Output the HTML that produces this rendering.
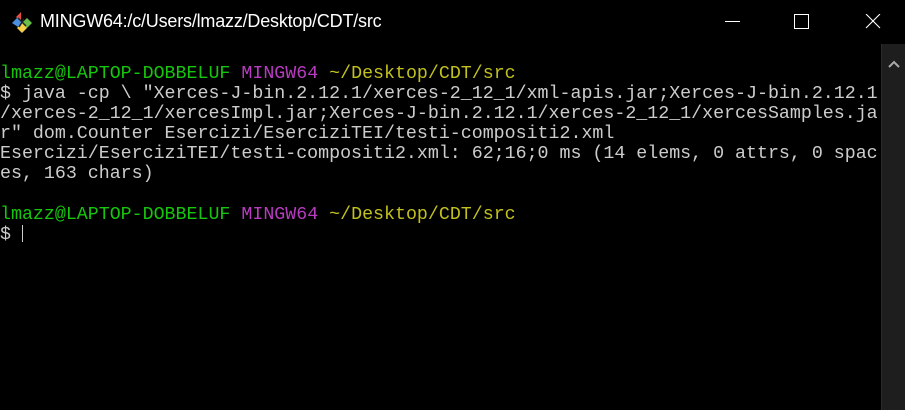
<!DOCTYPE html>
<html><head><meta charset="utf-8"><style>
html,body{margin:0;padding:0;background:#000;width:905px;height:410px;overflow:hidden;position:relative}
.title{position:absolute;left:0;top:0;width:905px;height:44px;background:#000}
.tt{position:absolute;left:40px;top:11px;color:#fff;font:18px "Liberation Sans",sans-serif;letter-spacing:-0.2px}
.term{position:absolute;left:0;top:64px;font-family:"Liberation Mono",monospace;font-size:18.3px;line-height:20.1px;color:#cccccc;white-space:pre}
.g{color:#16c60c}.m{color:#b83cc0}.y{color:#c1c01f}
.sb{position:absolute;left:881px;top:44px;width:24px;height:366px;background:#1e1e1e;border-left:1px solid #2a2a2a}
.cur{display:inline-block;width:1px;height:17px;background:#ccc;vertical-align:-3px}
</style></head><body>
<div class="title">
<svg style="position:absolute;left:10px;top:12px" width="24" height="22" viewBox="0 0 24 22">
<polygon points="6,5 11,0 11,10" fill="#e74c3c"/>
<polygon points="2,11 8,5 12,11 8,15" fill="#4a90e2"/>
<polygon points="12,11 17,6 22,11 17,16" fill="#6abf4b"/>
<polygon points="7,16 12,11 17,16 12,21" fill="#f5d04b"/>
<path d="M8,6 L16,14 M14,7 L9,15" stroke="#222" stroke-width="1.5"/>
</svg>
<div class="tt">MINGW64:/c/Users/lmazz/Desktop/CDT/src</div>
<svg style="position:absolute;left:700px;top:14px" width="200" height="20">
<line x1="25" y1="7.5" x2="40" y2="7.5" stroke="#fff" stroke-width="1"/>
<rect x="94.5" y="0.5" width="14" height="14" fill="none" stroke="#fff" stroke-width="1"/>
<path d="M166,0 L180,14 M180,0 L166,14" stroke="#fff" stroke-width="1.1"/>
</svg>
</div>
<div class="sb"><svg width="24" height="24" style="position:absolute;left:0;top:8px"><path d="M7,15 L12,10 L17,15" stroke="#aaa" stroke-width="2" fill="none"/></svg></div>
<div class="term"><span class="g">lmazz@LAPTOP-DOBBELUF</span> <span class="m">MINGW64</span> <span class="y">~/Desktop/CDT/src</span>
$ java -cp \ "Xerces-J-bin.2.12.1/xerces-2_12_1/xml-apis.jar;Xerces-J-bin.2.12.1
/xerces-2_12_1/xercesImpl.jar;Xerces-J-bin.2.12.1/xerces-2_12_1/xercesSamples.ja
r" dom.Counter Esercizi/EserciziTEI/testi-compositi2.xml
Esercizi/EserciziTEI/testi-compositi2.xml: 62;16;0 ms (14 elems, 0 attrs, 0 spac
es, 163 chars)

<span class="g">lmazz@LAPTOP-DOBBELUF</span> <span class="m">MINGW64</span> <span class="y">~/Desktop/CDT/src</span>
$ <span class="cur"></span></div>
</body></html>
